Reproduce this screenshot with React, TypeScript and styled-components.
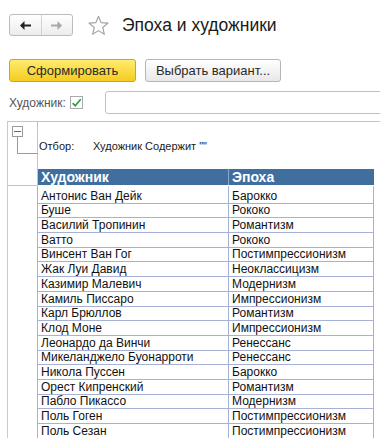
import React from 'react';
import styled, { createGlobalStyle } from 'styled-components';

const GlobalStyle = createGlobalStyle`
    html, body {
        margin: 0;
        padding: 0;
        background: #fff;
        font-family: "Liberation Sans", Arial, sans-serif;
        color: #1a1a1a;
        overflow: hidden;
    }
`;

const Page = styled.div`
    width: 380px;
    height: 438px;
    padding-top: 14px;
    box-sizing: border-box;
    overflow: hidden;
`;

const TitleBar = styled.div`
    display: flex;
    align-items: center;
    padding-left: 9px;
    height: 22px;
`;

const NavGroup = styled.div`
    display: flex;
    width: 64px;
    height: 22px;
    box-sizing: border-box;
    border: 1px solid #bcbcbc;
    border-radius: 3px;
    background: linear-gradient(#ffffff, #ececec);
`;

const NavButton = styled.div<{ divider?: boolean }>`
    flex: 1;
    display: flex;
    align-items: center;
    justify-content: center;
    border-left: ${({ divider }) => (divider ? '1px solid #d2d2d2' : 'none')};
`;

const StarBox = styled.div`
    margin-left: 15px;
    width: 21px;
    height: 21px;
    display: flex;
`;

const Title = styled.h1`
    margin: 0 0 0 13px;
    font-size: 17.5px;
    font-weight: normal;
    color: #1a1a1a;
    line-height: 22px;
`;

const Toolbar = styled.div`
    display: flex;
    gap: 9px;
    padding-left: 9px;
    margin-top: 23px;
`;

const Button = styled.div<{ primary?: boolean }>`
    height: 23px;
    box-sizing: border-box;
    width: ${({ primary }) => (primary ? '127px' : '136px')};
    display: flex;
    align-items: center;
    justify-content: center;
    font-size: 13px;
    color: #2a2a2a;
    border-radius: 3px;
    border: 1px solid ${({ primary }) => (primary ? '#c9a52c' : '#b6b6b6')};
    background: ${({ primary }) =>
        primary
            ? 'linear-gradient(#ffeb6e, #f5cd20)'
            : 'linear-gradient(#ffffff, #e8e8e8)'};
`;

const FieldRow = styled.div`
    display: flex;
    align-items: center;
    height: 23px;
    margin-top: 9px;
    padding-left: 9px;
`;

const FieldLabel = styled.span`
    width: 61px;
    font-size: 12px;
    color: #555;
`;

const CheckBox = styled.div`
    width: 13px;
    height: 13px;
    box-sizing: border-box;
    border: 1px solid #a9a9a9;
    background: #fff;
    display: flex;
    align-items: center;
    justify-content: center;
`;

const TextInput = styled.div`
    flex: 1;
    height: 23px;
    box-sizing: border-box;
    margin-left: 22px;
    margin-right: -6px;
    border: 1px solid #c0c0c0;
    border-radius: 3px;
    background: #fff;
`;

const Sheet = styled.div`
    margin-top: 7px;
    margin-left: 7px;
    border-top: 1px solid #c4c4c4;
    border-left: 1px solid #cacaca;
    display: flex;
    flex-direction: column;
`;

const GroupRow = styled.div`
    display: flex;
`;

const GutterTop = styled.div`
    width: 29px;
    height: 63px;
    border-right: 1px solid #c4c4c4;
    border-bottom: 1px solid #c4c4c4;
    box-sizing: content-box;
`;

const Toggle = styled.div`
    margin: 4px 0 0 4px;
    width: 11px;
    height: 11px;
    box-sizing: border-box;
    border: 1px solid #9a9a9a;
    background: #fff;
    display: flex;
    align-items: center;
    justify-content: center;

    &::before {
        content: '';
        width: 7px;
        height: 1px;
        background: #666;
    }
`;

const TreeLine = styled.div`
    margin-left: 9px;
    width: 20px;
    height: 16px;
    border-left: 1px solid #9a9a9a;
    border-bottom: 1px solid #9a9a9a;
`;

const GroupBody = styled.div`
    display: flex;
    flex-direction: column;
`;

const FilterLine = styled.div`
    height: 47px;
    display: flex;
    align-items: center;
    padding-left: 1px;
    font-size: 11px;
    color: #1a1a1a;
`;

const FilterLabel = styled.span`
    width: 54px;
`;

const HeaderRow = styled.div`
    display: grid;
    grid-template-columns: 190px 146px;
    height: 16px;
    background: #3f6e9f;
`;

const HeaderCell = styled.div<{ sep?: boolean }>`
    color: #fff;
    font-weight: bold;
    font-size: 14px;
    line-height: 16px;
    padding-left: 3px;
    border-left: ${({ sep }) => (sep ? '1px solid #8aa6c8' : 'none')};
`;

const DataRow = styled.div<{ first?: boolean }>`
    display: flex;
    height: ${({ first }) => (first ? '17.7px' : '14.7px')};
`;

const GutterCell = styled.div`
    width: 29px;
`;

const Cell = styled.div<{ w: number; last?: boolean }>`
    width: ${({ w }) => w}px;
    box-sizing: border-box;
    border-left: 1px solid #a7b1d5;
    border-right: ${({ last }) => (last ? '1px solid #a7b1d5' : 'none')};
    border-bottom: 1px solid #a7b1d5;
    font-size: 12px;
    line-height: 13px;
    padding-left: 3px;
    display: flex;
    align-items: flex-end;
    color: #111;
    white-space: nowrap;
`;

const rows: [string, string][] = [
    ['Антонис Ван Дейк', 'Барокко'],
    ['Буше', 'Рококо'],
    ['Василий Тропинин', 'Романтизм'],
    ['Ватто', 'Рококо'],
    ['Винсент Ван Гог', 'Постимпрессионизм'],
    ['Жак Луи Давид', 'Неоклассицизм'],
    ['Казимир Малевич', 'Модернизм'],
    ['Камиль Писсаро', 'Импрессионизм'],
    ['Карл Брюллов', 'Романтизм'],
    ['Клод Моне', 'Импрессионизм'],
    ['Леонардо да Винчи', 'Ренессанс'],
    ['Микеланджело Буонарроти', 'Ренессанс'],
    ['Никола Пуссен', 'Барокко'],
    ['Орест Кипренский', 'Романтизм'],
    ['Пабло Пикассо', 'Модернизм'],
    ['Поль Гоген', 'Постимпрессионизм'],
    ['Поль Сезан', 'Постимпрессионизм'],
];

const Arrow = ({ dir, color }: { dir: 'left' | 'right'; color: string }) => (
    <svg width="11" height="9" viewBox="0 0 11 9">
        <g
            transform={dir === 'right' ? 'translate(11 0) scale(-1 1)' : undefined}
            fill={color}
        >
            <rect x="3" y="3.5" width="8" height="2" />
            <path d="M0 4.5 L4.5 0 L4.5 9 Z" />
        </g>
    </svg>
);

const Star = () => (
    <svg width="21" height="21" viewBox="0 0 21 21">
        <path
            d="M10.5 1.2 L13.1 7.6 L20 8.1 L14.7 12.5 L16.4 19.3 L10.5 15.6 L4.6 19.3 L6.3 12.5 L1 8.1 L7.9 7.6 Z"
            fill="none"
            stroke="#a0a0a0"
            strokeWidth="1.1"
            strokeLinejoin="round"
        />
    </svg>
);

const Check = () => (
    <svg width="13" height="12" viewBox="0 0 13 12">
        <path
            d="M2 6.2 L5 9.3 L11.5 1.5"
            fill="none"
            stroke="#22a13c"
            strokeWidth="2"
        />
    </svg>
);

export default function App() {
    return (
        <Page>
            <GlobalStyle />
            <TitleBar>
                <NavGroup>
                    <NavButton>
                        <Arrow dir="left" color="#222" />
                    </NavButton>
                    <NavButton divider>
                        <Arrow dir="right" color="#a8a8a8" />
                    </NavButton>
                </NavGroup>
                <StarBox>
                    <Star />
                </StarBox>
                <Title>Эпоха и художники</Title>
            </TitleBar>

            <Toolbar>
                <Button primary>Сформировать</Button>
                <Button>Выбрать вариант...</Button>
            </Toolbar>

            <FieldRow>
                <FieldLabel>Художник:</FieldLabel>
                <CheckBox>
                    <Check />
                </CheckBox>
                <TextInput />
            </FieldRow>

            <Sheet>
                <GroupRow>
                    <GutterTop>
                        <Toggle />
                        <TreeLine />
                    </GutterTop>
                    <GroupBody>
                        <FilterLine>
                            <FilterLabel>Отбор:</FilterLabel>
                            <span>Художник Содержит ""</span>
                        </FilterLine>
                        <HeaderRow>
                            <HeaderCell>Художник</HeaderCell>
                            <HeaderCell sep>Эпоха</HeaderCell>
                        </HeaderRow>
                    </GroupBody>
                </GroupRow>
                {rows.map(([artist, epoch], i) => (
                    <DataRow key={artist} first={i === 0}>
                        <GutterCell />
                        <Cell w={191}>{artist}</Cell>
                        <Cell w={146} last>
                            {epoch}
                        </Cell>
                    </DataRow>
                ))}
            </Sheet>
        </Page>
    );
}
